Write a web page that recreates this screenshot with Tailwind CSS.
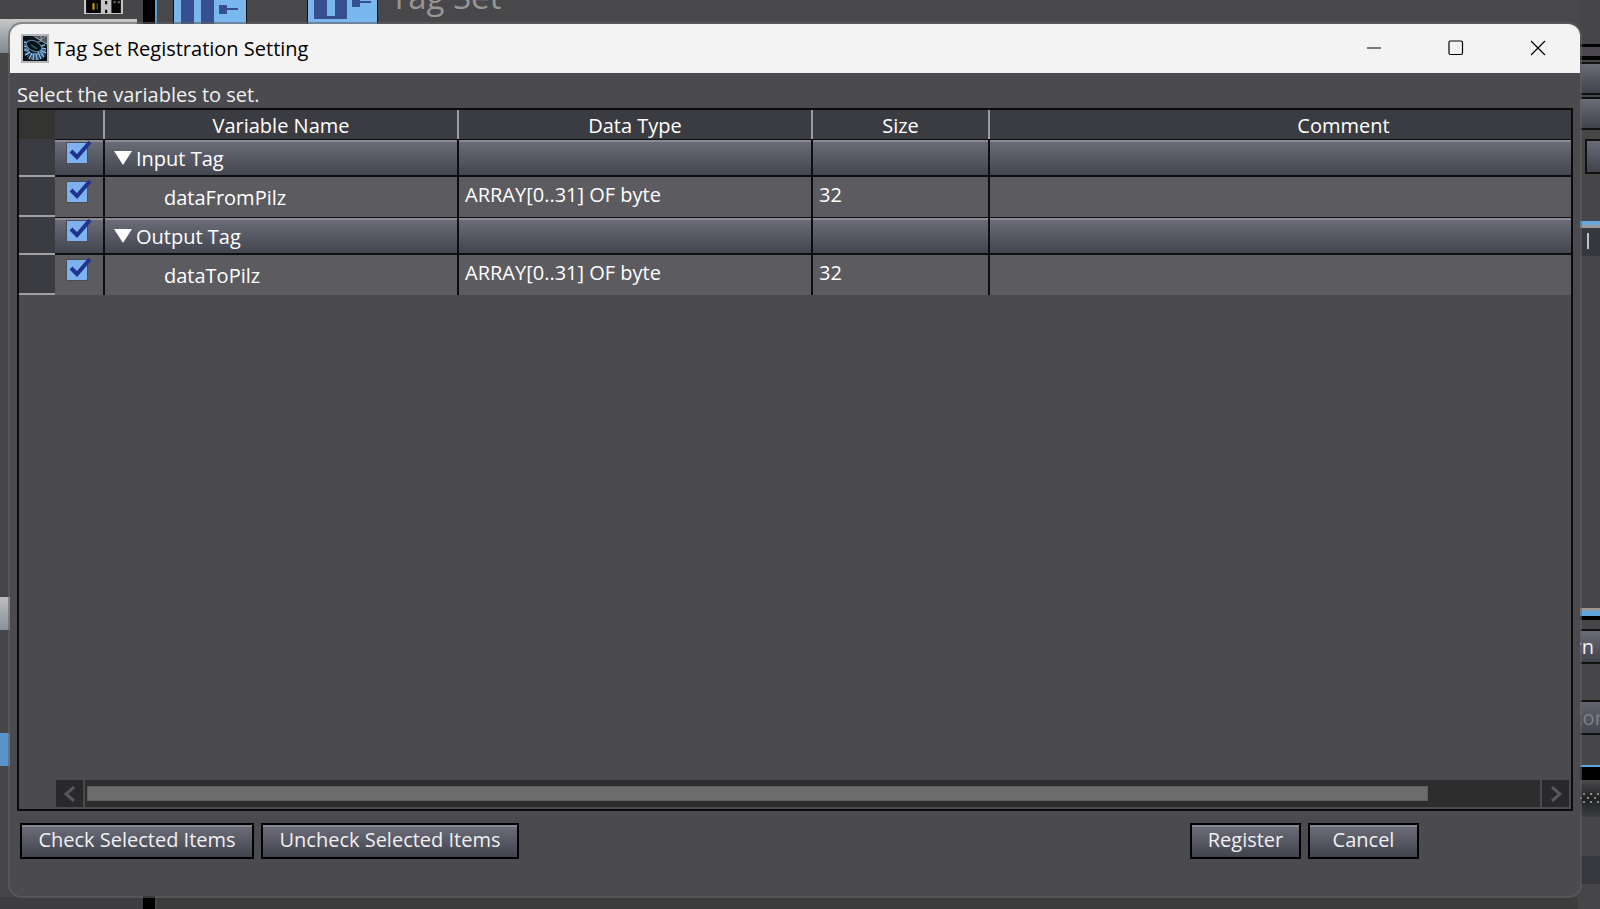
<!DOCTYPE html>
<html lang="en">
<head>
  <meta charset="UTF-8" />
  <meta name="viewport" content="width=device-width, initial-scale=1.0" />
  <title>Tag Set Registration Setting</title>
  <script src="https://cdn.jsdelivr.net/npm/@tailwindcss/browser@4"></script>
</head>
<body class="relative h-screen overflow-hidden bg-[#464648] font-['Open_Sans',sans-serif] text-[20px] leading-[26px] text-[#f0f0f0]">

  <!-- editor window behind the dialog -->
  <div class="flex h-full justify-between" aria-hidden="true">
    <div class="flex w-[143px] flex-col bg-[#464648]">
      <div class="flex h-[19px] justify-end pr-5">
        <svg class="h-[14px] w-[39px]" viewBox="0 0 37 13" preserveAspectRatio="none">
          <path fill="#c4c4c4" d="M0 0h37v13H0z" />
          <path fill="#050505" d="M2 0h14v12H2zM26 0h9v12h-9zM20 1h2v3h-2zM20 9h2v3h-2z" />
          <path fill="#c9a000" d="M8 3h2v6H8z" />
          <path fill="#666" d="M12 3h1v6h-1zM28 1h2v2h-2zM32 1h2v2h-2z" />
        </svg>
      </div>
      <div class="mr-[6px] h-[34px] bg-linear-to-b from-[#c8c8c8] to-[#7f8790]"></div>
      <div class="mt-[544px] h-[33px] bg-linear-to-b from-[#bdbdbd] to-[#87909a]"></div>
      <div class="mt-[103px] h-[33px] bg-[#5794cb]"></div>
      <div class="mt-auto h-3 bg-[#3e3e40]"></div>
    </div>
    <div class="w-3 bg-black"></div>
    <div class="h-6 w-[2px] bg-[#5a9bd0]"></div>
    <div class="flex flex-1 flex-col justify-between bg-[#48484a]">
      <div class="flex h-6 pl-4">
        <svg class="h-6 w-[74px]" viewBox="0 0 74 24">
          <path fill="#7ab7ee" d="M0 0h74v24H0z" />
          <path fill="#36508f" d="M8 0h13v24H8zM28 0h13v24H28zM46 5h8v3h11v2H54v4h-8z" />
          <path stroke="#111" stroke-width="2" d="M0 0v24M74 0v24" />
        </svg>
        <svg class="ml-[60px] h-6 w-[71px]" viewBox="0 0 71 24">
          <path fill="#7ab7ee" d="M0 0h71v24H0z" />
          <path fill="#36508f" d="M7 0h33v19H7zM45 0h8v1h11v2H53v4h-8z" />
          <path fill="#7ab7ee" d="M20 0h8v16h-8z" />
          <path stroke="#111" stroke-width="2" d="M0 0v24M71 0v24" />
        </svg>
        <span class="-mt-5 ml-3 h-9 text-[33px] leading-[34px] text-[#969696]">Tag Set</span>
      </div>
      <div class="h-3 bg-[#3c3c3d]"></div>
    </div>
    <div class="flex w-[22px] flex-col overflow-hidden bg-[#464648]">
      <div class="mt-[44px] h-4 border-t-3 border-b-4 border-black bg-[#4b484f]"></div>
      <div class="mt-[2px] h-[33px] border-y-2 border-[#111] bg-linear-to-b from-[#6a6c78] to-[#40424c]"></div>
      <div class="mt-[2px] h-[33px] border-y-2 border-[#111] bg-linear-to-b from-[#6a6c78] to-[#40424c]"></div>
      <div class="mt-[9px] ml-[7px] h-[35px] border-2 border-r-0 border-[#111] bg-linear-to-b from-[#6a6c78] to-[#40424c]"></div>
      <div class="mt-[47px] h-[7px] border-t-4 border-[#66a8de] bg-[#9a9a9a]"></div>
      <div class="h-7 bg-[#36373c] pt-[5px] pl-[9px]"><div class="h-4 w-[2px] bg-[#c0c0c0]"></div></div>
      <div class="mt-[352px] h-3 border-t-3 border-b-4 border-t-[#999] border-b-black bg-[#5fa4da]"></div>
      <div class="mt-[9px] flex h-[35px] items-center justify-end border-y-2 border-[#111] bg-linear-to-b from-[#6a6c78] to-[#40424c] pr-[6px]">rn</div>
      <div class="mt-9 flex h-[35px] items-center border-y-2 border-[#111] bg-linear-to-b from-[#62636e] to-[#44464f] text-[#808084]"><span class="-ml-2">Con</span></div>
      <div class="mt-[30px] h-[15px] border-t-2 border-[#5fa4da] bg-black"></div>
      <div class="h-[37px] bg-linear-to-b from-[#4a4a4c] via-[#202123] to-[#3c3e42] pt-[13px]">
        <svg class="h-[10px] w-[22px]" viewBox="0 0 22 10" fill="#8a8a8a">
          <path d="M5 0h2v2H5zM12 0h2v2h-2zM19 0h2v2h-2zM2 4h2v2H2zM9 4h2v2H9zM16 4h2v2h-2zM5 8h2v2H5zM12 8h2v2h-2zM19 8h2v2h-2z" />
        </svg>
      </div>
      <div class="mt-[39px] h-7 bg-[#37383d]"></div>
    </div>
  </div>

  <!-- dialog -->
  <main class="absolute top-[22px] right-[18px] bottom-[11px] left-2 flex flex-col overflow-hidden rounded-[14px] border-2 border-[#626264]/60 bg-[#4b4a4e] bg-clip-padding">
    <header class="flex h-[49px] shrink-0 items-center bg-[#f3f3f3] pl-[11px] text-black">
      <svg class="h-[29px] w-7" viewBox="0 0 28 29">
        <path fill="#b5b5b7" d="M0 0h28v29H0z" />
        <path fill="#0c1219" d="M2 2h24v25H2z" />
        <path fill="#4c545d" d="M11 2h15v9l-6-4z" />
        <path stroke="#9aa2aa" d="M14 3l12 7M25 2l-9 7M20 2v6" />
        <path stroke="#8cb8de" stroke-width="1.600" d="M3 8l4 1M3 12l4 1M3 16l5 0M4 21l5-3M8 25l3-6M12 26l1-7M16 26l-1-7M20 25l-3-7M23 23l-4-6M25 19l-6-3M25 15l-5-1M24 11l-4 1" />
        <path stroke="#4378a8" d="M3 10l4 1M3 14l5 1M4 18l5-1M6 23l4-5M10 26l2-7M14 26v-7M18 26l-2-7M22 24l-4-6M24 21l-5-4M25 17l-6-2" />
        <ellipse cx="13" cy="12" rx="8" ry="5" fill="#041216" stroke="#5d86a8" transform="rotate(25 13 12)" />
        <path stroke="#1d5a55" stroke-width="2" d="M10 11l6 4" />
      </svg>
      <h1 class="ml-[5px]">Tag Set Registration Setting</h1>
      <div class="ml-auto flex h-full pr-[1px] pb-[2px]">
        <button type="button" aria-label="Minimize" class="grid w-[82px] place-items-center">
          <svg class="size-4" viewBox="0 0 16 16" fill="none" stroke="#000" stroke-width="1.200"><path d="M1 8h14" /></svg>
        </button>
        <button type="button" aria-label="Maximize" class="grid w-[82px] place-items-center">
          <svg class="size-4" viewBox="0 0 16 16" fill="none" stroke="#000" stroke-width="1.200"><rect x="1" y="1" width="13.500" height="13.500" rx="1.500" /></svg>
        </button>
        <button type="button" aria-label="Close" class="grid w-[82px] place-items-center">
          <svg class="size-4" viewBox="0 0 16 16" fill="none" stroke="#000" stroke-width="1.200"><path d="M1 1l14 14M15 1L1 15" /></svg>
        </button>
      </div>
    </header>

    <div class="flex min-h-0 flex-1 flex-col px-[7px] pt-[9px]">
      <p>Select the variables to set.</p>

      <div class="flex min-h-0 flex-1 flex-col justify-between overflow-hidden border-2 border-[#0b0b0b]">
        <div class="overflow-hidden">
          <table class="w-[1680px] table-fixed border-separate border-spacing-0 text-left text-white">
            <colgroup>
              <col class="w-9" /><col class="w-[50px]" /><col class="w-[354px]" /><col class="w-[354px]" /><col class="w-[177px]" /><col />
            </colgroup>
            <thead>
              <tr class="h-[29px] bg-[#3b3c41] text-center">
                <td class="bg-[#333332] p-0"></td>
                <td class="border-r-2 border-[#9c9c9e] p-0"></td>
                <th scope="col" class="border-r-2 border-[#9c9c9e] p-0 pt-[3px] font-normal">Variable Name</th>
                <th scope="col" class="border-r-2 border-[#9c9c9e] p-0 pt-[3px] font-normal">Data Type</th>
                <th scope="col" class="border-r-2 border-[#9c9c9e] p-0 pt-[3px] font-normal">Size</th>
                <th scope="col" class="p-0 pt-[3px] pr-[2px] font-normal">Comment</th>
              </tr>
            </thead>
            <tbody id="tagRows"></tbody>
          </table>
        </div>

        <div class="mr-[2px] mb-[2px] ml-[37px] flex h-[27px] gap-[2px]">
          <button type="button" aria-label="Scroll left" class="grid w-[27px] place-items-center bg-[#29292b]">
            <svg class="h-4 w-3" viewBox="0 0 12 16" fill="none" stroke="#58585a" stroke-width="3"><path d="M10 1L2 8l8 7" /></svg>
          </button>
          <div class="flex-1 bg-[#2d2d2e] py-[6px] pl-[2px]">
            <div class="h-full border border-[#5e5e5e] bg-[#6c6c6c]" style="width: 92.3%"></div>
          </div>
          <button type="button" aria-label="Scroll right" class="grid w-[27px] place-items-center bg-[#29292b]">
            <svg class="h-4 w-3" viewBox="0 0 12 16" fill="none" stroke="#58585a" stroke-width="3"><path d="M2 1l8 7-8 7" /></svg>
          </button>
        </div>
      </div>

      <footer class="flex gap-[7px] pt-3 pr-[154px] pb-[37px] pl-[3px]">
        <button type="button" class="h-9 w-[234px] border-2 border-black bg-linear-to-b from-[#6e6f7b] to-[#41434d] pb-[2px] shadow-[inset_0_2px_0_#86868f]">Check Selected Items</button>
        <button type="button" class="h-9 w-[258px] border-2 border-black bg-linear-to-b from-[#6e6f7b] to-[#41434d] pb-[2px] shadow-[inset_0_2px_0_#86868f]">Uncheck Selected Items</button>
        <button type="button" class="ml-auto h-9 w-[111px] border-2 border-black bg-linear-to-b from-[#6e6f7b] to-[#41434d] pb-[2px] shadow-[inset_0_2px_0_#86868f]">Register</button>
        <button type="button" class="h-9 w-[111px] border-2 border-black bg-linear-to-b from-[#6e6f7b] to-[#41434d] pb-[2px] shadow-[inset_0_2px_0_#86868f]">Cancel</button>
      </footer>
    </div>
  </main>

  <script>
    const tags = [
      { name: "Input Tag", group: true },
      { name: "dataFromPilz", type: "ARRAY[0..31] OF byte", size: "32" },
      { name: "Output Tag", group: true },
      { name: "dataToPilz", type: "ARRAY[0..31] OF byte", size: "32" },
    ];

    const arrow = `<svg class="mr-1 mb-[2px] h-[14px] w-[18px]" viewBox="0 0 18 14" fill="#fff"><path d="M0 0h18L9 14z"/></svg>`;

    document.getElementById("tagRows").innerHTML = tags.map((t) => {
      const row = t.group
        ? "h-[38px] bg-linear-to-b from-[#6e6f7b] to-[#41434d] shadow-[inset_0_3px_0_#8b8b94]"
        : "h-10 bg-[#5c5b5f]";
      const line = t.group ? "border-t border-b-2" : "";
      return `
        <tr class="${row}">
          <td class="border-b-2 border-[#a0a0a2] bg-[#3b3c41] p-0"></td>
          <td class="${line} border-r-2 border-[#0e0e10] p-0 align-top">
            <label class="relative ml-[11px] block size-[22px] ${t.group ? "mt-[2px]" : "mt-1"}">
              <input type="checkbox" checked aria-label="${t.name}" class="block size-[22px] appearance-none border border-[#4a4d55] bg-[#7db2ee]" />
              <svg class="absolute -top-[2px] left-0 h-6 w-[26px]" viewBox="0 0 26 24" fill="none" stroke="#20338f" stroke-width="4"><path d="M5 11l6 6L24 2"/></svg>
            </label>
          </td>
          <td class="${line} border-r-2 border-[#0e0e10] p-0">
            <div class="flex items-center ${t.group ? "pt-[2px] pl-[9px]" : "pt-[2px] pl-[59px]"}">${t.group ? arrow : ""}${t.name}</div>
          </td>
          <td class="${line} border-r-2 border-[#0e0e10] p-0 pb-1 pl-[6px]">${t.type || ""}</td>
          <td class="${line} border-r-2 border-[#0e0e10] p-0 pb-1 pl-[6px]">${t.size || ""}</td>
          <td class="${line} border-[#0e0e10] p-0"></td>
        </tr>`;
    }).join("");
  </script>
</body>
</html>
